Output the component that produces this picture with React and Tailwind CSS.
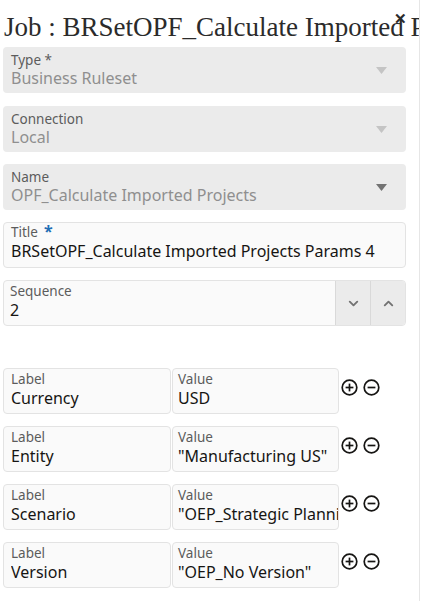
import { ChevronDown, ChevronUp } from 'lucide-react';

const sans = { fontFamily: '"Noto Sans", "Open Sans", sans-serif' };

function Caret({ dark }) {
  return (
    <svg width="11" height="7" viewBox="0 0 11 7" className="flex-shrink-0">
      <path d="M0 0 H11 L5.5 7 Z" fill={dark ? '#737373' : '#c4c4c4'} />
    </svg>
  );
}

function SelectField({ label, value, dark }) {
  return (
    <div className="h-[46px] rounded bg-[#ebebeb] flex items-center pl-[8px] pr-[19px]">
      <div className="flex-1 min-w-0 leading-none">
        <div className="text-[13.5px] text-[#5c5c5c] leading-[15px]">{label}</div>
        <div className="text-[16px] text-[#8f8f8f] leading-[20px] truncate">{value}</div>
      </div>
      <Caret dark={dark} />
    </div>
  );
}

function CircleIcon({ plus }) {
  return (
    <svg width="17" height="17" viewBox="0 0 17 17" fill="none" stroke="#161513" strokeWidth="1.7">
      <circle cx="8.5" cy="8.5" r="7.3" />
      <path d="M4.6 8.5 H12.4" />
      {plus && <path d="M8.5 4.6 V12.4" />}
    </svg>
  );
}

function ParamRow({ label, value }) {
  return (
    <div className="flex items-center">
      <div className="w-[168px] h-[46px] rounded bg-[#fafafa] border border-[#e3e3e3] pl-[7px] pt-[3px]">
        <div className="text-[13.5px] text-[#5c5c5c] leading-[15px]">Label</div>
        <div className="text-[16px] text-[#161513] leading-[22px] truncate">{label}</div>
      </div>
      <div className="w-[167px] h-[46px] ml-px rounded bg-[#fafafa] border border-[#e3e3e3] pl-[5px] pt-[3px] overflow-hidden">
        <div className="text-[13.5px] text-[#5c5c5c] leading-[15px]">Value</div>
        <div className="text-[16px] text-[#161513] leading-[22px] whitespace-nowrap overflow-hidden">{value}</div>
      </div>
      <div className="flex items-center gap-[5px] ml-[2px] -mt-[8px]">
        <CircleIcon plus />
        <CircleIcon />
      </div>
    </div>
  );
}

export default function App() {
  return (
    <div className="w-[441px] h-[601px] bg-white overflow-hidden" style={sans}>
      <div className="w-[420px] h-[601px] border-r border-[#e6e6e6] relative overflow-hidden">
        <div
          className="pl-[4px] pt-[12px] h-[47px] text-[27px] leading-[30px] text-[#2b2b2b] whitespace-nowrap"
          style={{ fontFamily: '"Liberation Serif", "DejaVu Serif", serif' }}
        >
          Job : BRSetOPF_Calculate Imported Projects Params 4
        </div>
        <div className="absolute left-[394px] top-[11px] text-[15px] font-bold leading-none text-[#2b2b2b]">✕</div>

        <div className="pl-[3px] w-[406px] flex flex-col gap-[12px]">
          <div className="flex flex-col gap-[13px]">
            <SelectField label="Type *" value="Business Ruleset" />
            <SelectField label="Connection" value="Local" />
          </div>
          <SelectField label="Name" value="OPF_Calculate Imported Projects" dark />

          <div className="h-[46px] rounded bg-[#fafafa] border border-[#e3e3e3] pl-[7px] pt-[2px]">
            <div className="text-[13.5px] text-[#5c5c5c] leading-[15px] flex items-start">
              Title
              <span className="text-[#1f6eb5] font-bold text-[16px] leading-[12px] ml-[6px]">*</span>
            </div>
            <div className="text-[16px] text-[#161513] leading-[22px] truncate">BRSetOPF_Calculate Imported Projects Params 4</div>
          </div>

          <div className="h-[46px] rounded bg-[#fafafa] border border-[#e3e3e3] flex overflow-hidden">
            <div className="flex-1 pl-[6px] pt-[3px]">
              <div className="text-[13.5px] text-[#5c5c5c] leading-[15px]">Sequence</div>
              <div className="text-[16px] text-[#161513] leading-[22px]">2</div>
            </div>
            <div className="w-[35px] bg-[#ebebeb] border-l border-[#d9d9d9] flex items-center justify-center">
              <ChevronDown size={15} strokeWidth={3} color="#737373" />
            </div>
            <div className="w-[35px] bg-[#ebebeb] border-l border-[#d9d9d9] flex items-center justify-center">
              <ChevronUp size={15} strokeWidth={3} color="#737373" />
            </div>
          </div>
        </div>

        <div className="pl-[3px] mt-[42px] flex flex-col gap-[12px]">
          <ParamRow label="Currency" value="USD" />
          <ParamRow label="Entity" value={'"Manufacturing US"'} />
          <ParamRow label="Scenario" value={'"OEP_Strategic Planning"'} />
          <ParamRow label="Version" value={'"OEP_No Version"'} />
        </div>
      </div>
    </div>
  );
}
